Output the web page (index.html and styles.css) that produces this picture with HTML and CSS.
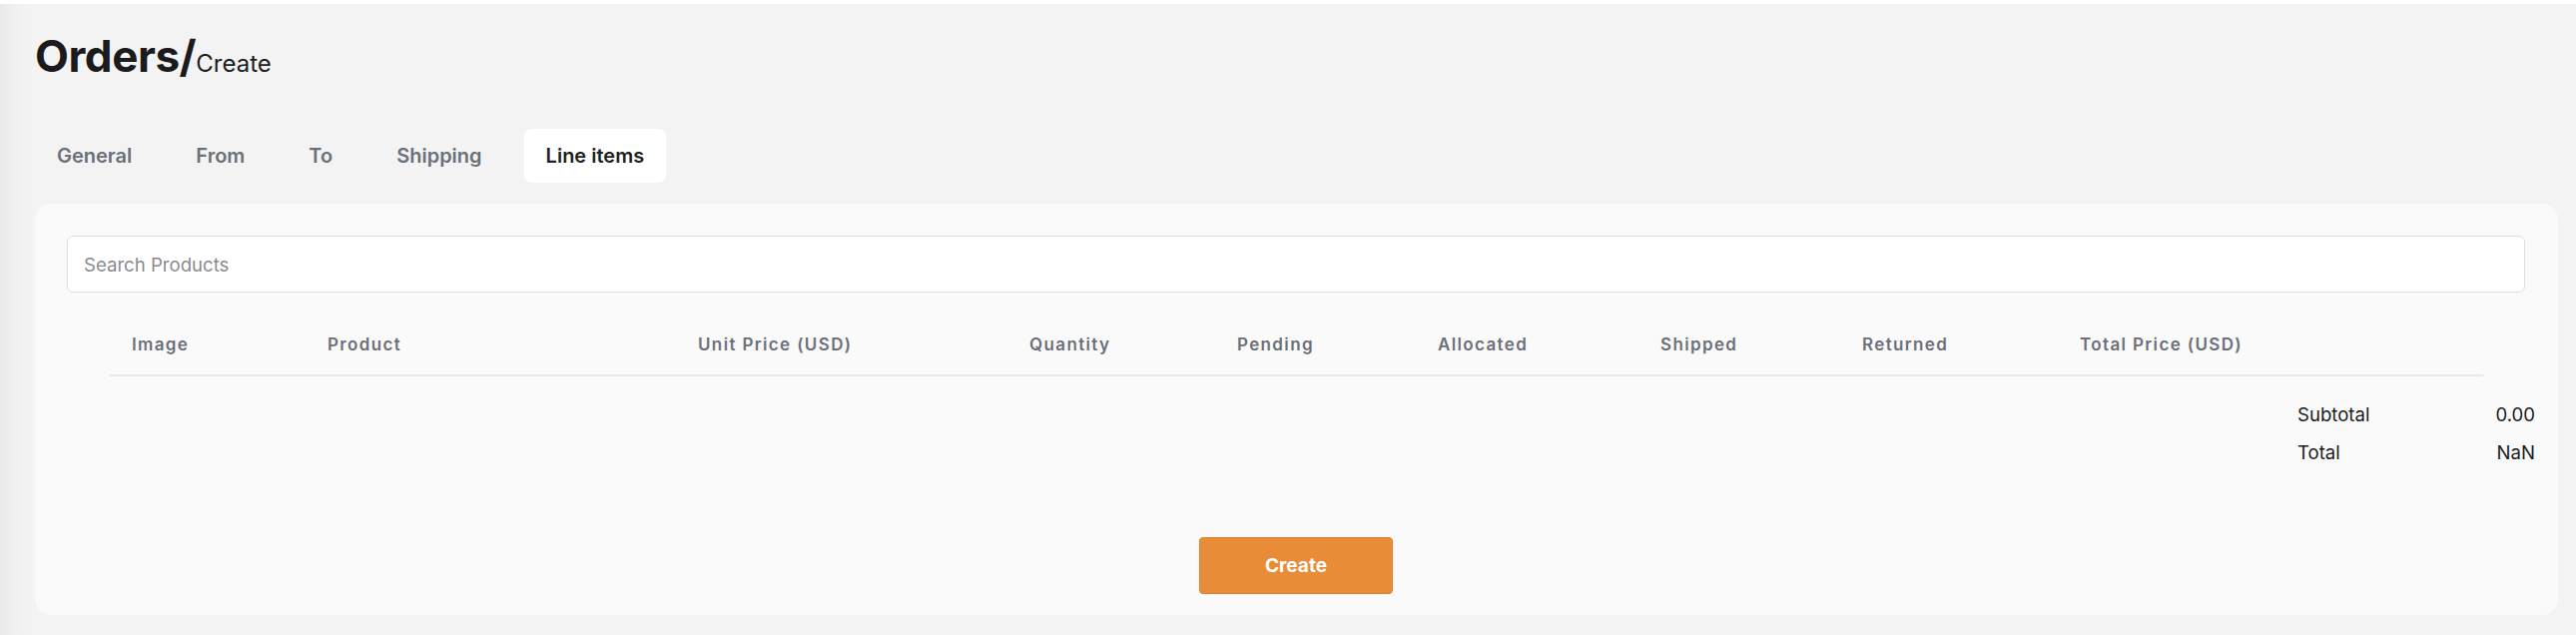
FILE: index.html
```html
<!DOCTYPE html>
<html lang="en">
<head>
<meta charset="utf-8">
<title>Orders / Create</title>
<link rel="stylesheet" href="styles.css">
</head>
<body>
<main class="page">
  <h1 class="title">Orders/<span class="title-sub">Create</span></h1>
  <nav class="tabs">
    <span class="tab">General</span>
    <span class="tab">From</span>
    <span class="tab">To</span>
    <span class="tab">Shipping</span>
    <span class="tab tab-active">Line items</span>
  </nav>
  <section class="card">
    <input class="search" type="text" placeholder="Search Products">
    <div class="table">
      <div class="table-head">
        <div class="th">Image</div>
        <div class="th">Product</div>
        <div class="th">Unit Price (USD)</div>
        <div class="th">Quantity</div>
        <div class="th">Pending</div>
        <div class="th">Allocated</div>
        <div class="th">Shipped</div>
        <div class="th">Returned</div>
        <div class="th">Total Price (USD)</div>
      </div>
    </div>
    <div class="totals">
      <div class="totals-row"><span>Subtotal</span><span>0.00</span></div>
      <div class="totals-row"><span>Total</span><span>NaN</span></div>
    </div>
    <div class="actions">
      <button class="btn-create" type="button">Create</button>
    </div>
  </section>
</main>
</body>
</html>
```
FILE: styles.css
```css
* { box-sizing: border-box; }

html, body {
  margin: 0;
  padding: 0;
  background: #ffffff;
  font-family: Inter, "Noto Sans", "Liberation Sans", sans-serif;
  color: #1c1c1e;
}

.page {
  margin-top: 4px;
  height: 632px;
  padding: 24px 18px 0 35px;
  background: linear-gradient(to right, #e9e9eb 0, #f0f0f1 14px, #f3f3f3 32px) no-repeat, #f3f3f3;
}

.title {
  margin: 0;
  height: 56px;
  font-size: 44px;
  line-height: 56px;
  font-weight: 700;
  letter-spacing: -0.01em;
  color: #1b1b1d;
}

.title-sub {
  font-size: 24px;
  line-height: 1;
  font-weight: 400;
  letter-spacing: 0;
}

.tabs {
  display: flex;
  gap: 20px;
  margin-top: 45px;
  margin-bottom: 21px;
}

.tab {
  padding: 13px 22px;
  font-size: 20px;
  line-height: 28px;
  font-weight: 600;
  color: #6b7079;
  border-radius: 8px;
}

.tab-active {
  background: #ffffff;
  color: #1e1f22;
}

.card {
  background: #fafafa;
  border-radius: 16px;
  padding: 32px 33px 21px 32px;
  height: 412px;
}

.search {
  display: block;
  width: 100%;
  height: 57px;
  padding: 0 16px;
  border: 1px solid #dedee2;
  border-radius: 6px;
  background: #ffffff;
  font-family: inherit;
  font-size: 18.6px;
  color: #1c1c1e;
  outline: none;
}

.search::placeholder {
  color: #8b8b8f;
}

.table {
  margin: 24px 42px 0 43px;
}

.table-head {
  display: grid;
  grid-template-columns: 196px 371px 332px 208px 201px 223px 202px 218px 1fr;
  height: 60px;
  align-items: center;
  border-bottom: 2px solid #e8e8ec;
}

.th {
  padding: 0 0 2px 22px;
  font-size: 17px;
  font-weight: 600;
  letter-spacing: 0.08em;
  color: #6b7079;
  white-space: nowrap;
}

.totals {
  display: flex;
  flex-direction: column;
  align-items: flex-end;
  margin: 19px -10px 0 0;
}

.totals-row {
  display: flex;
  justify-content: space-between;
  width: 238px;
  font-size: 18.6px;
  line-height: 38px;
  color: #1c1c1e;
}

.actions {
  display: flex;
  justify-content: center;
  margin-top: 66px;
}

.btn-create {
  width: 194px;
  height: 57px;
  border: 1px solid #d9822f;
  border-radius: 4px;
  background: #e88c37;
  color: #ffffff;
  font-family: inherit;
  font-size: 19px;
  font-weight: 700;
  cursor: pointer;
}
```
